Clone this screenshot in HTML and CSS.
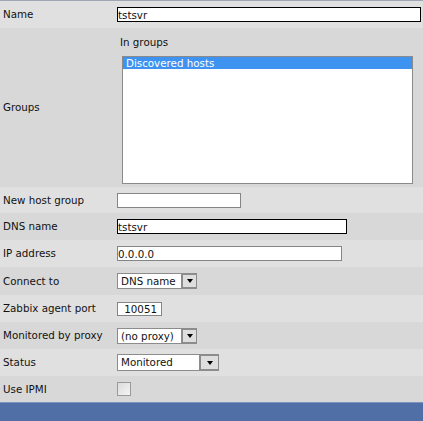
FILE: index.html
```html
<!DOCTYPE html>
<html>
<head>
<meta charset="utf-8">
<link rel="stylesheet" href="styles.css">
</head>
<body>
<div class="form">
  <div class="row light h27">
    <div class="label">Name</div>
    <div class="field"><span class="txt dark-border w-name">tstsvr</span></div>
  </div>
  <div class="row dark groups-row">
    <div class="label">Groups</div>
    <div class="field groups-field">
      <div class="in-groups">In groups</div>
      <div class="listbox">
        <div class="option selected">Discovered hosts</div>
      </div>
    </div>
  </div>
  <div class="row light h26">
    <div class="label">New host group</div>
    <div class="field"><span class="txt w-newgroup"></span></div>
  </div>
  <div class="row dark h27">
    <div class="label">DNS name</div>
    <div class="field"><span class="txt dark-border w-dns">tstsvr</span></div>
  </div>
  <div class="row light h27">
    <div class="label">IP address</div>
    <div class="field"><span class="txt w-ip">0.0.0.0</span></div>
  </div>
  <div class="row dark h28">
    <div class="label">Connect to</div>
    <div class="field">
      <span class="select w-connect"><span class="sel-text">DNS name</span><span class="sel-btn"><span class="tri"></span></span></span>
    </div>
  </div>
  <div class="row light h27">
    <div class="label">Zabbix agent port</div>
    <div class="field"><span class="txt port w-port">10051</span></div>
  </div>
  <div class="row dark h27">
    <div class="label">Monitored by proxy</div>
    <div class="field">
      <span class="select w-proxy"><span class="sel-text">(no proxy)</span><span class="sel-btn"><span class="tri"></span></span></span>
    </div>
  </div>
  <div class="row light h27">
    <div class="label">Status</div>
    <div class="field">
      <span class="select tall w-status"><span class="sel-text">Monitored</span><span class="sel-btn wide"><span class="tri"></span></span></span>
    </div>
  </div>
  <div class="row dark h26">
    <div class="label">Use IPMI</div>
    <div class="field"><span class="checkbox"></span></div>
  </div>
</div>
<div class="footer"></div>
</body>
</html>
```
FILE: styles.css
```css
html, body {
  margin: 0;
  padding: 0;
  background: #d9d9d9;
}
body {
  width: 423px;
  height: 421px;
  overflow: hidden;
  font-family: "DejaVu Sans", Verdana, sans-serif;
  font-size: 10.3px;
  color: #111;
}
.form {
  border-top: 1px solid #9ea5b4;
}
.row {
  display: grid;
  grid-template-columns: 117px 1fr;
  align-items: center;
}
.light { background: #e0e0e0; }
.dark { background: #d8d8d8; }
.h26 { height: 26px; }
.h27 { height: 27px; }
.h28 { height: 28px; }
.groups-row { height: 159px; }
.label {
  padding-left: 3px;
  white-space: nowrap;
  line-height: 13px;
}
.field {
  display: flex;
  align-items: center;
  line-height: 13px;
}
.groups-field {
  flex-direction: column;
  align-items: flex-start;
  align-self: stretch;
  padding-top: 8px;
}
.in-groups {
  padding-left: 3px;
  line-height: 13px;
}
.listbox {
  margin-top: 7px;
  margin-left: 5px;
  width: 289px;
  height: 126px;
  border: 1px solid #8a8a8a;
  background: #fff;
}
.option {
  height: 12px;
  line-height: 12px;
  padding-left: 3px;
  white-space: nowrap;
}
.selected {
  background: #3d93ef;
  color: #fff;
}
.txt {
  display: block;
  box-sizing: border-box;
  height: 15px;
  border: 1px solid #858585;
  background: #fff;
  line-height: 11px;
  padding-top: 2px;
  white-space: nowrap;
  overflow: hidden;
}
.dark-border { border-color: #000; }
.w-name { width: 304px; }
.w-newgroup { width: 124px; }
.w-dns { width: 230px; }
.w-ip { width: 225px; }
.w-port {
  width: 45px;
  height: 14px;
  text-align: right;
  padding-right: 4px;
  padding-top: 1px;
}
.select {
  display: flex;
  box-sizing: border-box;
  height: 16px;
  border: 1px solid #8c8c8c;
  background: #fff;
}
.select.tall { height: 17px; }
.w-connect, .w-proxy { width: 80px; }
.w-status { width: 102px; }
.sel-text {
  flex: 1;
  padding-left: 3px;
  line-height: 14px;
  white-space: nowrap;
  overflow: hidden;
}
.sel-btn {
  box-sizing: border-box;
  width: 15px;
  border: 2px solid #8c8c8c;
  border-top-width: 1px;
  border-bottom-width: 1px;
  border-right-width: 0;
  background: #dedede;
  display: flex;
  align-items: center;
  justify-content: center;
}
.sel-btn.wide { width: 19px; }
.tri {
  width: 0;
  height: 0;
  border-left: 3.5px solid transparent;
  border-right: 3.5px solid transparent;
  border-top: 4px solid #000;
}
.checkbox {
  display: block;
  box-sizing: border-box;
  width: 14px;
  height: 14px;
  border: 1px solid #9a9a9a;
  background: linear-gradient(135deg, #dcdcdc, #f4f4f4);
}
.footer {
  height: 19px;
  background: #4f6fa6;
  border-top: 1px solid #7d92bc;
}
```
